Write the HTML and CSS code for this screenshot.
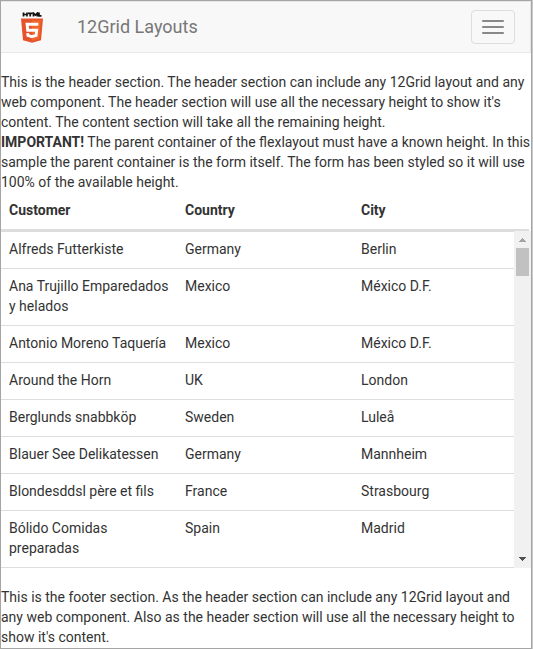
FILE: index.html
```
<!DOCTYPE html>
<html lang="en">
<head>
<meta charset="utf-8">
<title>12Grid Layouts</title>
<link rel="stylesheet" href="styles.css">
</head>
<body>
<div class="form">
  <nav class="navbar">
    <svg class="logo" width="22" height="31" viewBox="0 0 22 31">
      <path d="M2.500 .5v4M6 .5v4M2.500 2.500H6M7 1.300h4.500M9.200 1.300v3.200M12.500 4.500V1.200l1.900 1.800 1.900-1.800v3.300M18 .5v3.300h2.500" fill="none" stroke="#111" stroke-width="1.700"/>
      <path d="M0 6.500h22l-2 21.700-9 2.500-9-2.500z" fill="#e5532d"/>
      <path d="M11 8.300h9l-1.700 18.400-7.300 2z" fill="#f1662a"/>
      <path d="M17.400 12.300H6.100l.6 5.900h9l-.6 5.300-4.100 1.200-4.100-1.200-.2-2.400" fill="none" stroke="#fff" stroke-width="2.900"/>
    </svg>
    <span class="brand">12Grid Layouts</span>
    <button class="toggle" type="button"><i></i><i></i><i></i></button>
  </nav>
  <header class="intro">This is the header section. The header section can include any 12Grid layout and any<br>web component. The header section will use all the necessary height to show it's<br>content. The content section will take all the remaining height.<br><b>IMPORTANT!</b> The parent container of the flexlayout must have a known height. In this<br>sample the parent container is the form itself. The form has been styled so it will use<br>100% of the available height.</header>
  <div class="row head"><span>Customer</span><span>Country</span><span>City</span></div>
  <main class="content">
    <div class="rows">
      <div class="row"><span>Alfreds Futterkiste</span><span>Germany</span><span>Berlin</span></div>
      <div class="row"><span>Ana Trujillo Emparedados<br>y helados</span><span>Mexico</span><span>México D.F.</span></div>
      <div class="row"><span>Antonio Moreno Taquería</span><span>Mexico</span><span>México D.F.</span></div>
      <div class="row"><span>Around the Horn</span><span>UK</span><span>London</span></div>
      <div class="row"><span>Berglunds snabbköp</span><span>Sweden</span><span>Luleå</span></div>
      <div class="row"><span>Blauer See Delikatessen</span><span>Germany</span><span>Mannheim</span></div>
      <div class="row"><span>Blondesddsl père et fils</span><span>France</span><span>Strasbourg</span></div>
      <div class="row"><span>Bólido Comidas<br>preparadas</span><span>Spain</span><span>Madrid</span></div>
    </div>
    <div class="scrollbar">
      <svg width="17" height="17" shape-rendering="crispEdges"><path d="M5 11h7v-1h-1V9h-1V8H9V7H8v1H7v1H6v1H5z" fill="#a3a3a3"/></svg>
      <div class="thumb"></div>
      <svg width="17" height="17" shape-rendering="crispEdges"><path d="M5 6h7v1h-1v1h-1v1H9v1H8V9H7V8H6V7H5z" fill="#505050"/></svg>
    </div>
  </main>
  <footer class="outro">This is the footer section. As the header section can include any 12Grid layout and<br>any web component. Also as the header section will use all the necessary height to<br>show it's content.</footer>
</div>
</body>
</html>
```
FILE: styles.css
```
* { box-sizing: border-box; }
body {
  margin: 0;
  background: #c8c8c8;
  color: #333;
  font: 14px/20px Roboto, "Liberation Sans", sans-serif;
}
.form {
  display: flex;
  flex-direction: column;
  width: 532px;
  height: 649px;
  border: 1px solid #a5a5a5;
  background: #fff;
  white-space: nowrap;
}
.navbar {
  display: flex;
  align-items: center;
  flex: none;
  height: 52px;
  padding: 0 15px 0 20px;
  margin-bottom: 19px;
  background: #f8f8f8;
  border: 1px solid #e7e7e7;
  border-left: 0;
}
.logo { display: block; }
.brand {
  margin-left: 34px;
  color: #777;
  font-size: 18px;
}
.toggle {
  display: flex;
  flex-direction: column;
  align-items: center;
  justify-content: center;
  gap: 4px;
  width: 44px;
  height: 34px;
  margin-left: auto;
  padding: 0;
  background: transparent;
  border: 1px solid #ddd;
  border-radius: 4px;
}
.toggle i {
  width: 22px;
  height: 2px;
  border-radius: 1px;
  background: #888;
}
.intro { flex: none; }
.row {
  display: grid;
  grid-template-columns: 176px 176px 1fr;
  padding: 7px 0 9px;
  border-top: 1px solid #ddd;
}
.row span { padding-left: 8px; }
.head {
  flex: none;
  width: 528px;
  font-weight: bold;
  border-top-color: transparent;
  border-bottom: 2px solid #ddd;
}
.content {
  display: flex;
  flex: 1;
  min-height: 0;
  overflow: hidden;
}
.rows {
  flex: 1;
  border-bottom: 1px solid #ddd;
}
.scrollbar {
  display: flex;
  flex-direction: column;
  width: 17px;
  background: #f1f1f1;
}
.scrollbar svg {
  display: block;
  flex: none;
}
.scrollbar svg:last-child { margin-top: auto; }
.thumb {
  width: 13px;
  height: 28px;
  margin-left: 2px;
  background: #c1c1c1;
}
.outro {
  flex: none;
  padding: 19px 0 1px;
}
```
